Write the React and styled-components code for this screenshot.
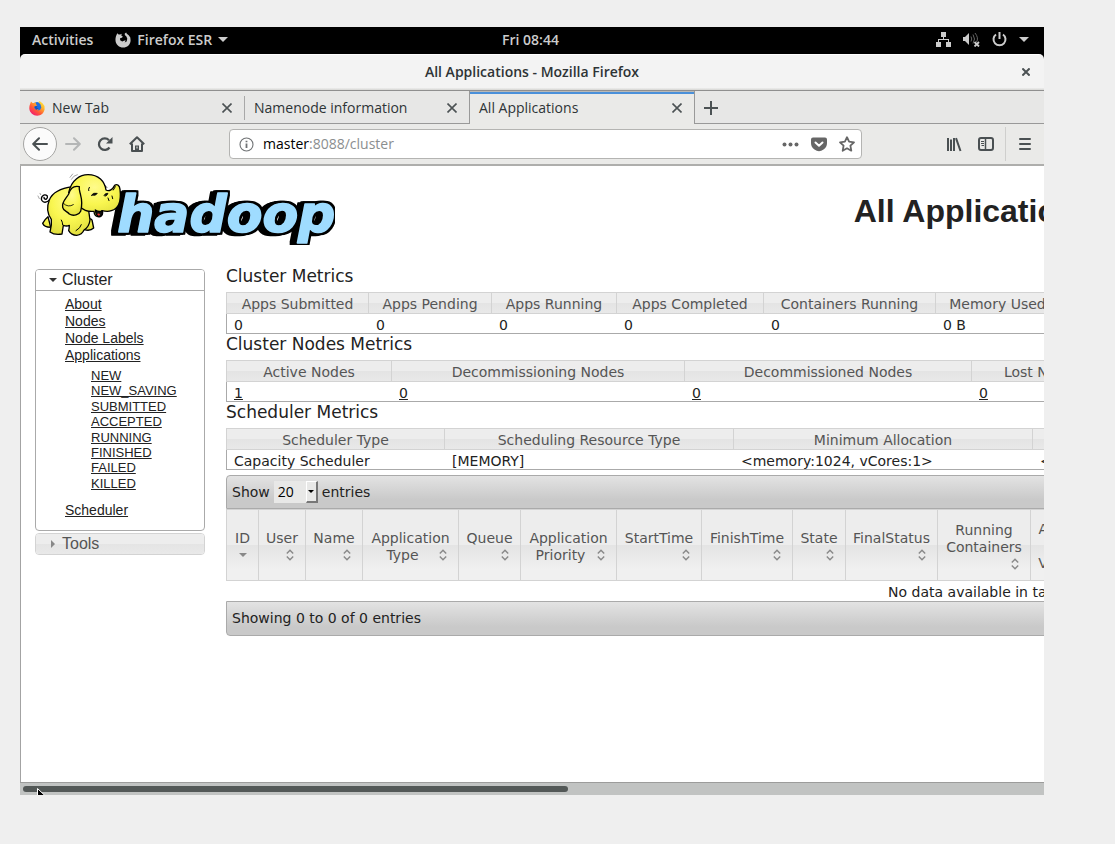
import React from "react";
import styled, { createGlobalStyle, css } from "styled-components";

const uiFont = `"Open Sans", "Noto Sans", sans-serif`;
const tableFont = `"DejaVu Sans", sans-serif`;
const arialFont = `"Liberation Sans", Arial, sans-serif`;

const GlobalStyle = createGlobalStyle`
  *, *::before, *::after { box-sizing: border-box; }
  body { margin: 0; background: #efefef; color: #222; font: 14px/17px ${tableFont}; }
  button, select, input { font: inherit; color: inherit; }
  h1, h2, p, ul { margin: 0; padding: 0; }
`;

const Desktop = styled.div`
  display: flex;
  flex-direction: column;
  min-height: 100vh;
  padding: 27px 71px 49px 20px;
`;

const Screen = styled.div`
  display: flex;
  flex-direction: column;
  flex: 1;
  min-width: 0;
  background: #000;
`;

/* ---------- GNOME top bar ---------- */

const TopBar = styled.header`
  display: grid;
  grid-template-columns: 1fr auto 1fr;
  align-items: center;
  height: 27px;
  padding: 0 15px 2px 12px;
  color: #ccc;
  font: 600 14px/20px ${uiFont};
`;

const TopGroup = styled.div`
  display: flex;
  align-items: center;
  gap: ${(p) => p.$gap}px;
  justify-content: ${(p) => (p.$end ? "flex-end" : "flex-start")};
`;

const PlainButton = styled.button`
  display: inline-flex;
  align-items: center;
  justify-content: center;
  gap: 6px;
  padding: 0;
  border: 0;
  background: none;
`;

/* ---------- Firefox window ---------- */

const TitleBar = styled.div`
  display: grid;
  grid-template-columns: 36px 1fr 36px;
  align-items: center;
  height: 37px;
  border-bottom: 1px solid #8f8f8f;
  border-radius: 5px 5px 0 0;
  background: linear-gradient(#fff 0 1px, #f3f3f3 1px 34px, #dcdcda 35px);
  color: #2e3436;
  font: 600 14px/20px ${uiFont};
  text-align: center;
`;

const TabBar = styled.div`
  display: flex;
  height: 33px;
  background: linear-gradient(#e7e7e6 0 32px, #999 32px);
  color: #2e3436;
  font: 14px/20px ${uiFont};
`;

const Tab = styled.div`
  display: flex;
  align-items: center;
  gap: 7px;
  width: 225px;
  padding: 1px 13px 0 9px;
  ${(p) =>
    p.$active
      ? css`
          width: 226px;
          margin-left: -1px;
          padding-right: 12px;
          border: solid #999;
          border-width: 0 1px;
          background: linear-gradient(#b9b9b7 0 1px, #4a90d9 1px 3px, #eaeae8 3px);
        `
      : css`
          background: linear-gradient(#a8a8a8, #a8a8a8) right 5px / 1px 24px no-repeat;
          &:has(+ [data-active="true"]) { background: none; }
        `}
`;

const TabLabel = styled.span`
  flex: 1;
  white-space: nowrap;
`;

const NavBar = styled.nav`
  display: flex;
  align-items: center;
  height: 42px;
  padding: 0 3px;
  border-bottom: 2px solid #aeaeac;
  background: #eaeae8;
  color: #4a5052;
`;

const NavButton = styled.button`
  display: inline-flex;
  align-items: center;
  justify-content: center;
  flex: none;
  width: 32px;
  height: 34px;
  padding: 0;
  border: 0;
  background: none;
  color: ${(p) => (p.$dim ? "#b4b6b6" : "inherit")};
  ${(p) =>
    p.$round &&
    css`
      width: 34px;
      border: 1px solid #a5a5a3;
      border-radius: 17px;
      background: #fbfbfb;
    `}
`;

const UrlBox = styled.div`
  display: flex;
  align-items: center;
  flex: 1;
  height: 30px;
  margin: 0 76px;
  padding: 0 6px 0 9px;
  border: 1px solid #b4b4b2;
  border-radius: 4px;
  background: #fff;
  color: #5d6061;
  font: 14px/20px ${uiFont};
`;

const Address = styled.div`
  flex: 1;
  padding-left: 9px;
  color: #8b8e8f;
  b { color: #000; font-weight: 400; }
`;

const UrlIcons = styled.div`
  display: flex;
  align-items: center;
  gap: 12px;
`;

const NavDivider = styled.span`
  width: 1px;
  height: 34px;
  margin: 0 3px;
  background: #cfcfcd;
`;

/* ---------- Web page ---------- */

const Viewport = styled.main`
  flex: 1;
  overflow: hidden;
  border-left: 1px solid #a3a3a3;
  background: #fff;
`;

const PageGrid = styled.div`
  display: grid;
  grid-template-columns: 170px 1504px;
  grid-template-rows: 100px auto;
  column-gap: 21px;
  padding-left: 14px;
`;

const LogoLink = styled.a`
  grid-area: 1 / 1 / 2 / 3;
  width: 300px;
  height: 72px;
  margin-top: 7px;
  svg { display: block; }
`;

const PageTitle = styled.h1`
  grid-area: 1 / 2;
  padding: 9px 8px 0 0;
  font: 700 32px/72px ${arialFont};
  text-align: center;
  justify-self: center;
`;

const Sidebar = styled.aside`
  display: flex;
  flex-direction: column;
  gap: 2px;
  padding-top: 3px;
  font-family: ${arialFont};
`;

const glass = css`
  background: linear-gradient(#ededed 0 50%, #e4e4e4 50%, #f0f0f0 calc(50% + 25px));
`;

const Panel = styled.section`
  overflow: hidden;
  border: 1px solid ${(p) => (p.$open ? "#aaa" : "#d3d3d3")};
  border-radius: 4px;
`;

const PanelToggle = styled.button`
  display: flex;
  align-items: center;
  gap: 5px;
  width: 100%;
  height: 20px;
  padding: 0 0 0 13px;
  border: 0;
  color: #555;
  font: 16px/20px ${arialFont};
  ${glass}
  ${(p) =>
    p.$open &&
    css`
      height: 21px;
      border-bottom: 1px solid #aaa;
      background: #fff;
      color: #222;
    `}
`;

const LinkList = styled.ul`
  padding: 5px 0 11px 29px;
  list-style: none;
  font: 14px/17px ${arialFont};
  a { color: #222; }
`;

const StateList = styled.ul`
  display: grid;
  grid-auto-rows: 1fr;
  height: 123px;
  margin: 4px 0 11px 26px;
  list-style: none;
  font: 13px/15px ${arialFont};
`;

const Content = styled.div`
  display: flex;
  flex-direction: column;
`;

const SectionTitle = styled.h2`
  height: 26px;
  padding-bottom: 6px;
  font: 17px/20px ${tableFont};
`;

const Table = styled.table`
  width: 100%;
  table-layout: fixed;
  border-spacing: 0;
  color: #222;
`;

const HeadCell = styled.th`
  height: 22px;
  padding: 3px 7px 0;
  overflow: hidden;
  border: 1px solid #d3d3d3;
  border-left-width: 0;
  color: #555;
  font-weight: 400;
  white-space: nowrap;
  ${glass}
  &:first-child { border-left-width: 1px; }
`;

const Cell = styled.td`
  height: 20px;
  padding: 3px 7px 0;
  border-bottom: 1px solid #aaa;
  line-height: 16px;
  white-space: nowrap;
  &:first-child { border-left: 1px solid #aaa; }
  a { color: #222; }
`;

const SortHeadCell = styled(HeadCell)`
  height: 72px;
  padding: 3px 7px 0;
  white-space: normal;
`;

const SortLabel = styled.div`
  display: flow-root;
  cursor: pointer;
`;

const SortIcon = styled.svg`
  float: right;
  width: 16px;
  height: 16px;
`;

const EmptyCell = styled.td`
  height: 20px;
  padding: 3px 0 0;
  text-align: center;
`;

const GridBar = styled.div`
  display: flex;
  align-items: center;
  gap: 4px;
  height: ${(p) => (p.$foot ? 35 : 34)}px;
  margin-top: ${(p) => (p.$foot ? 0 : 5)}px;
  padding: 0 5px;
  border: 1px solid #aaa;
  border-radius: ${(p) => (p.$foot ? "0 0 4px 4px" : "4px 4px 0 0")};
  background: linear-gradient(#e3e3e3, #c9c9c9 75%);
`;

const ShowLabel = styled.label`
  display: flex;
  align-items: center;
  gap: 4px;
`;

const SelectBox = styled.span`
  display: inline-grid;
  width: 44px;
  height: 22px;
`;

const CountSelect = styled.select`
  grid-area: 1 / 1;
  appearance: none;
  padding: 0 4px;
  border: 0;
  border-radius: 0;
  background: #e8e8e7;
  color: #000;
  font: 14px/20px ${uiFont};
`;

const SelectArrow = styled.span`
  display: flex;
  align-items: center;
  justify-content: center;
  grid-area: 1 / 1;
  justify-self: end;
  width: 12px;
  border: 1px solid #fff;
  border-right: 2px solid #777;
  border-bottom: 2px solid #777;
  background: #e8e8e7;
  pointer-events: none;
`;

const ScrollTrack = styled.div`
  position: relative;
  height: 13px;
  padding: 3px;
  border-top: 1px solid #9c9c9b;
  overflow: hidden;
  background: #c1c3c2;
`;

const ScrollThumb = styled.div`
  width: 545px;
  max-width: 100%;
  height: 6px;
  border-radius: 3px;
  background: #535857;
`;

const Cursor = styled.svg`
  position: absolute;
  top: 5px;
  left: 17px;
`;

/* ---------- Icons ---------- */

const Caret = ({ size = 10, fill = "currentColor" }) => (
  <svg width={size} height={size / 2} viewBox="0 0 10 5" aria-hidden="true">
    <path d="M0 0h10L5 5z" fill={fill} />
  </svg>
);

const Cross = ({ size = 10, weight = 1.6 }) => (
  <svg width={size} height={size} viewBox="0 0 10 10" fill="none" stroke="#4c5254" strokeWidth={weight} aria-hidden="true">
    <path d="M.5.5l9 9M9.5.5l-9 9" />
  </svg>
);

const FirefoxMono = () => (
  <svg width="16" height="16" viewBox="0 0 16 16" aria-hidden="true">
    <path
      d="M1.500 3L2.300 1.200 3.600 2.600 5.200 2.600 6.600 1.700 6.400 3.800 8 4.800 6.300 6 5 6.200 5.200 8.200 7.200 9.400 9.500 8.400 10.800 8.400 9.600 10.400 11.600 9.400 12.300 6.800 11.400 4.500 9.800 3 9.800 1.600 11.200.6 11.800 1.800 13.700 3.300 15.300 5.600 15.600 8.800C15.200 12.800 12.200 15.600 8.200 15.600S.700 12.500.5 8.500C.4 6.500.7 4.800 1.500 3z"
      fill="#ccc"
    />
  </svg>
);

const FirefoxColor = () => (
  <svg width="16" height="16" viewBox="0 0 16 16" aria-hidden="true">
    <defs>
      <linearGradient id="fx" x1="1" y1="0" x2="0.2" y2="1">
        <stop offset="0" stopColor="#fff44f" />
        <stop offset="0.35" stopColor="#ffb52a" />
        <stop offset="0.65" stopColor="#ff5a36" />
        <stop offset="1" stopColor="#f0147a" />
      </linearGradient>
    </defs>
    <circle cx="8" cy="7.500" r="5.500" fill="#1b6fe0" />
    <path d="M1.300 3.500L2 1.500 3.500 3 5.800 3 7 1.800 6.800 4 8.300 5.400 6 6.300 5 7.800 6.800 9.600 9.500 8.900 8.500 10.500 11 10 12.300 7.500 11.500 4.500 9.500 2.300 10.500 1 13.500 3.200 15.500 6 15.600 9.500C14.800 13.300 12 15.700 8.200 15.700S.500 12.700.3 8.500C.3 6.500.6 5 1.300 3.500z" fill="url(#fx)" />
    <path d="M5.500 6.500L8.500 6 7.500 7.500 9.800 8.600 7 9.700z" fill="#1450b8" />
  </svg>
);

const NetworkIcon = () => (
  <svg width="15" height="15" viewBox="0 0 15 15" fill="#ccc" aria-hidden="true">
    <path d="M5 0h5v5H8v2h5v3h2v5h-5v-5h2V8H3v2h2v5H0v-5h2V7h5V5H5z" />
  </svg>
);

const VolumeIcon = () => (
  <svg width="17" height="15" viewBox="0 0 17 15" fill="none" stroke="#666" aria-hidden="true">
    <path d="M0 5h2l4-4v12L2 9H0z" fill="#ccc" stroke="none" />
    <path d="M8 4.500q1.500 2.500 0 5M10 2.500q3 4.500 0 9M12 1q4 5 1.500 9" />
    <path d="M11.500 10l4.500 4.500M16 10l-4.500 4.500" stroke="#ccc" strokeWidth="1.800" />
  </svg>
);

const PowerIcon = () => (
  <svg width="15" height="15" viewBox="0 0 15 15" fill="none" stroke="#ccc" strokeWidth="2" aria-hidden="true">
    <path d="M4 2.500a6 6 0 1 0 7 0M7.500 0v7" />
  </svg>
);

const BackIcon = () => (
  <svg width="16" height="14" viewBox="0 0 16 14" fill="none" stroke="currentColor" strokeWidth="2" strokeLinejoin="round" strokeLinecap="round" aria-hidden="true">
    <path d="M15 7H1.500M7 1.200L1.200 7 7 12.800" />
  </svg>
);

const ForwardIcon = () => (
  <svg width="16" height="14" viewBox="0 0 16 14" fill="none" stroke="currentColor" strokeWidth="2" strokeLinejoin="round" strokeLinecap="round" aria-hidden="true">
    <path d="M1 7h13.500M9 1.200L14.800 7 9 12.800" />
  </svg>
);

const ReloadIcon = () => (
  <svg width="16" height="16" viewBox="0 0 16 16" fill="none" stroke="currentColor" strokeWidth="2.200" aria-hidden="true">
    <path d="M12.500 11.500A5.800 5.800 0 1 1 12 4.200" />
    <path d="M15.500 1v6.500H9z" fill="currentColor" stroke="none" />
  </svg>
);

const HomeIcon = () => (
  <svg width="16" height="16" viewBox="0 0 16 16" fill="none" stroke="currentColor" strokeWidth="2" strokeLinejoin="round" aria-hidden="true">
    <path d="M.8 8.300L8 1.200l7.200 7.100M3 7.500V15h10V7.500" />
    <path d="M6 15v-5.500h4V15z" fill="currentColor" stroke="none" />
    <path d="M8 10.500v2" stroke="#eaeae8" strokeWidth="1" />
  </svg>
);

const InfoIcon = () => (
  <svg width="15" height="15" viewBox="0 0 15 15" fill="none" stroke="#6f7274" aria-hidden="true">
    <circle cx="7.500" cy="7.500" r="6.500" strokeWidth="1.100" />
    <path d="M7.500 6.500V11M7.500 3.700v1.600" strokeWidth="1.800" />
  </svg>
);

const DotsIcon = () => (
  <svg width="17" height="5" viewBox="0 0 17 5" fill="#666" aria-hidden="true">
    <circle cx="2.500" cy="2.500" r="2" />
    <circle cx="8.500" cy="2.500" r="2" />
    <circle cx="14.500" cy="2.500" r="2" />
  </svg>
);

const PocketIcon = () => (
  <svg width="16" height="15" viewBox="0 0 16 15" aria-hidden="true">
    <path d="M2 .5h12q2 0 2 2V6q0 4-3.500 6.500Q8 16 3.500 12.500 0 10 0 6V2.500q0-2 2-2z" fill="#666" />
    <path d="M4.500 5.500L8 8.800l3.500-3.300" fill="none" stroke="#fff" strokeWidth="2" strokeLinecap="round" strokeLinejoin="round" />
  </svg>
);

const StarIcon = () => (
  <svg width="16" height="16" viewBox="0 0 16 16" fill="none" stroke="#666" strokeWidth="1.800" strokeLinejoin="round" aria-hidden="true">
    <path d="M8 1.200l2.100 4.500 4.900.6-3.600 3.400.9 5L8 12.300l-4.300 2.400.9-5L1 6.300l4.900-.6z" />
  </svg>
);

const LibraryIcon = () => (
  <svg width="16" height="15" viewBox="0 0 16 15" fill="none" stroke="currentColor" strokeWidth="2" aria-hidden="true">
    <path d="M2 1v13M5 2.500V14M8 1v13M10 1.200L14.500 14" />
  </svg>
);

const SidebarIcon = () => (
  <svg width="16" height="14" viewBox="0 0 16 14" fill="none" stroke="currentColor" aria-hidden="true">
    <rect x="1" y="1" width="14" height="12" rx="2" strokeWidth="2" />
    <path d="M7.500 1v12" strokeWidth="1.500" />
    <path d="M3 4.500h3M3 6.500h3M3.500 8.500H6" />
  </svg>
);

const MenuIcon = () => (
  <svg width="12" height="12" viewBox="0 0 12 12" fill="none" stroke="currentColor" strokeWidth="2" strokeLinecap="round" aria-hidden="true">
    <path d="M1 1h10M1 6h10M1 11h10" />
  </svg>
);

const SortGlyph = ({ sorted }) => (
  <SortIcon viewBox="0 0 16 16" aria-hidden="true">
    {sorted ? (
      <path d="M4 6h8l-4 4z" fill="#888" />
    ) : (
      <path d="M4.800 6.500L8 3.300l3.200 3.200M4.800 9.500L8 12.700l3.200-3.200" fill="none" stroke="#888" strokeWidth="1.400" />
    )}
  </SortIcon>
);

const HadoopLogo = () => (
  <svg width="300" height="72" viewBox="45 24 900 216" role="img" aria-label="hadoop">
    <defs>
      <radialGradient id="hide" cx="0.5" cy="0.3" r="0.8">
        <stop offset="0" stopColor="#fffb8c" />
        <stop offset="0.5" stopColor="#f9f650" />
        <stop offset="1" stopColor="#dcd93a" />
      </radialGradient>
      <filter id="slab" x="-10%" y="-10%" width="120%" height="120%" colorInterpolationFilters="sRGB">
        <feMorphology in="SourceAlpha" operator="dilate" radius="6" result="fat" />
        <feOffset in="fat" dx="-7" dy="1" result="near" />
        <feOffset in="fat" dx="-14" dy="2" result="far" />
        <feMerge>
          <feMergeNode in="far" />
          <feMergeNode in="near" />
          <feMergeNode in="fat" />
          <feMergeNode in="SourceGraphic" />
        </feMerge>
      </filter>
    </defs>
    <text
      x="292"
      y="200"
      fill="#9fdcff"
      stroke="#9fdcff"
      strokeWidth="5"
      strokeLinejoin="round"
      fontFamily="DejaVu Sans"
      fontWeight="700"
      fontStyle="italic"
      fontSize="156"
      filter="url(#slab)"
    >
      hadoop
    </text>
    <g transform="translate(42 15)" stroke="#000" strokeWidth="4" strokeLinejoin="round" strokeLinecap="round" fill="url(#hide)">
      <path d="M48 88C32 106 18 92 24 80q8-10 16-2 2 6-4 10-6 0-6-6" fill="none" />
      <path d="M42 140q-10 8-16 20 4 12 24 12zM150 150q20-8 24 0l5 24q-10 10-28 5z" />
      <path d="M116 50C84 54 56 66 46 90c-8 20-6 42 6 58q2 16-4 38 14 10 36 6l4-26q10 4 18 0 0 8-2 16 8 14 24 14 16-2 22-16 16-10 18-30l-10-70z" />
      <path d="M86 164q0-8-4-14M126 182q14-8 16-18" fill="none" strokeWidth="3" />
      <path d="M104 68C112 28 140 14 162 14c32 0 50 20 54 46 10 6 20-2 26-14 8-6 15 2 16 12 4 34-4 58-26 64-10 4-20 2-28 0 4 6 2 14-6 18-12 2-18-6-18-16-20 2-34-6-42-14z" />
      <path d="M184 120q12 8 20 2 4 14-6 18-12 0-14-20z" fill="#111" />
      <path d="M189 132q5-4 9 1-1 5-4 4z" fill="#e33" stroke="none" />
      <path d="M136 50C118 46 108 58 104 72c-6 12-22 24-18 40 2 12 14 12 20 20 12 8 30 2 34-8 4-16 4-34 0-48-2-10-6-16-4-26z" />
      <path d="M88 100q14 14 30 4" fill="none" strokeWidth="2.500" />
      <path d="M172 76q6-10 18-6-4 8-12 6zM210 76q4-8 12-6-2 6-6 8z" fill="#111" strokeWidth="2" />
      <path d="M164 62q-2-4 2-10M218 52l-6-6M222 84l3 8M234 78l2 8M238 60l6-10" fill="none" strokeWidth="3" />
      <path d="M112 28q6-12 18-14M108 22l8-10M12 78l4 8M18 70l2 4" fill="none" stroke="#777" strokeWidth="2" />
    </g>
  </svg>
);

/* ---------- Data ---------- */

const clusterMetrics = [
  { title: "Apps Submitted", value: "0", width: 143 },
  { title: "Apps Pending", value: "0", width: 123 },
  { title: "Apps Running", value: "0", width: 125 },
  { title: "Apps Completed", value: "0", width: 147 },
  { title: "Containers Running", value: "0", width: 172 },
  { title: "Memory Used", value: "0 B", width: 124 },
  { title: "", value: "" },
];

const nodeMetrics = [
  { title: "Active Nodes", value: "1", width: 166, link: true },
  { title: "Decommissioning Nodes", value: "0", width: 293, link: true },
  { title: "Decommissioned Nodes", value: "0", width: 287, link: true },
  { title: "Lost Nodes", value: "0", width: 142, link: true },
  { title: "", value: "" },
];

const schedulerMetrics = [
  { title: "Scheduler Type", value: "Capacity Scheduler", width: 219 },
  { title: "Scheduling Resource Type", value: "[MEMORY]", width: 289 },
  { title: "Minimum Allocation", value: "<memory:1024, vCores:1>", width: 299 },
  { title: "", value: "<" },
];

const appColumns = [
  { title: "ID", width: 33, sorted: true },
  { title: "User", width: 47 },
  { title: "Name", width: 57 },
  { title: "Application Type", width: 96 },
  { title: "Queue", width: 62 },
  { title: "Application Priority", width: 96 },
  { title: "StartTime", width: 85 },
  { title: "FinishTime", width: 91 },
  { title: "State", width: 53 },
  { title: "FinalStatus", width: 92 },
  { title: "Running Containers", width: 93 },
  { title: "Allocated CPU VCores", width: 81 },
  { title: "" },
];

const appStates = ["NEW", "NEW_SAVING", "SUBMITTED", "ACCEPTED", "RUNNING", "FINISHED", "FAILED", "KILLED"];

const Columns = ({ items }) => (
  <colgroup>
    {items.map((c, i) => (
      <col key={i} width={c.width} />
    ))}
  </colgroup>
);

const MetricsTable = ({ title, items }) => (
  <section>
    <SectionTitle>{title}</SectionTitle>
    <Table aria-label={title}>
      <Columns items={items} />
      <thead>
        <tr>
          {items.map((c, i) => (
            <HeadCell key={i}>{c.title}</HeadCell>
          ))}
        </tr>
      </thead>
      <tbody>
        <tr>
          {items.map((c, i) => (
            <Cell key={i}>{c.link ? <a href="#nodes">{c.value}</a> : c.value}</Cell>
          ))}
        </tr>
      </tbody>
    </Table>
  </section>
);

export default function App() {
  return (
    <Desktop>
      <GlobalStyle />
      <Screen>
        <TopBar>
          <TopGroup $gap={22}>
            <PlainButton>Activities</PlainButton>
            <PlainButton>
              <FirefoxMono />
              Firefox ESR
              <Caret />
            </PlainButton>
          </TopGroup>
          <PlainButton>Fri 08:44</PlainButton>
          <TopGroup $gap={12} $end>
            <NetworkIcon />
            <VolumeIcon />
            <PowerIcon />
            <Caret fill="#ccc" />
          </TopGroup>
        </TopBar>

        <TitleBar>
          <span />
          <span>All Applications - Mozilla Firefox</span>
          <PlainButton aria-label="Close window">
            <Cross size={8} weight={2.5} />
          </PlainButton>
        </TitleBar>

        <TabBar>
          <Tab>
            <FirefoxColor />
            <TabLabel>New Tab</TabLabel>
            <PlainButton aria-label="Close tab"><Cross /></PlainButton>
          </Tab>
          <Tab>
            <TabLabel>Namenode information</TabLabel>
            <PlainButton aria-label="Close tab"><Cross /></PlainButton>
          </Tab>
          <Tab $active data-active="true">
            <TabLabel>All Applications</TabLabel>
            <PlainButton aria-label="Close tab"><Cross /></PlainButton>
          </Tab>
          <NavButton aria-label="New tab">
            <svg width="14" height="14" viewBox="0 0 14 14" stroke="#4c5254" strokeWidth="2" aria-hidden="true">
              <path d="M7 0v14M0 7h14" />
            </svg>
          </NavButton>
        </TabBar>

        <NavBar>
          <NavButton $round aria-label="Back"><BackIcon /></NavButton>
          <NavButton $dim aria-label="Forward"><ForwardIcon /></NavButton>
          <NavButton aria-label="Reload"><ReloadIcon /></NavButton>
          <NavButton aria-label="Home"><HomeIcon /></NavButton>
          <UrlBox>
            <InfoIcon />
            <Address><b>master</b>:8088/cluster</Address>
            <UrlIcons>
              <DotsIcon />
              <PocketIcon />
              <StarIcon />
            </UrlIcons>
          </UrlBox>
          <NavButton aria-label="Library"><LibraryIcon /></NavButton>
          <NavButton aria-label="Sidebars"><SidebarIcon /></NavButton>
          <NavDivider />
          <NavButton aria-label="Menu"><MenuIcon /></NavButton>
        </NavBar>

        <Viewport>
          <PageGrid>
            <LogoLink href="#home"><HadoopLogo /></LogoLink>
            <PageTitle>All Applications</PageTitle>

            <Sidebar>
              <Panel $open>
                <PanelToggle $open aria-expanded="true">
                  <Caret size={8} fill="#333" />
                  Cluster
                </PanelToggle>
                <LinkList>
                  <li><a href="#about">About</a></li>
                  <li><a href="#nodes">Nodes</a></li>
                  <li><a href="#labels">Node Labels</a></li>
                  <li>
                    <a href="#apps">Applications</a>
                    <StateList>
                      {appStates.map((s) => (
                        <li key={s}><a href={`#${s}`}>{s}</a></li>
                      ))}
                    </StateList>
                  </li>
                  <li><a href="#scheduler">Scheduler</a></li>
                </LinkList>
              </Panel>
              <Panel>
                <PanelToggle aria-expanded="false">
                  <svg width="8" height="8" viewBox="0 0 8 8" aria-hidden="true">
                    <path d="M2 0l4 4-4 4z" fill="#888" />
                  </svg>
                  Tools
                </PanelToggle>
              </Panel>
            </Sidebar>

            <Content>
              <MetricsTable title="Cluster Metrics" items={clusterMetrics} />
              <MetricsTable title="Cluster Nodes Metrics" items={nodeMetrics} />
              <MetricsTable title="Scheduler Metrics" items={schedulerMetrics} />

              <GridBar>
                <ShowLabel>
                  Show
                  <SelectBox>
                    <CountSelect defaultValue="20">
                      <option>20</option>
                      <option>40</option>
                    </CountSelect>
                    <SelectArrow><Caret size={6} fill="#000" /></SelectArrow>
                  </SelectBox>
                  entries
                </ShowLabel>
              </GridBar>
              <Table aria-label="Applications">
                <Columns items={appColumns} />
                <thead>
                  <tr>
                    {appColumns.map((c, i) => (
                      <SortHeadCell key={i}>
                        {c.title && (
                          <SortLabel>
                            {c.title}
                            <SortGlyph sorted={c.sorted} />
                          </SortLabel>
                        )}
                      </SortHeadCell>
                    ))}
                  </tr>
                </thead>
                <tbody>
                  <tr>
                    <EmptyCell colSpan={appColumns.length}>No data available in table</EmptyCell>
                  </tr>
                </tbody>
              </Table>
              <GridBar $foot>Showing 0 to 0 of 0 entries</GridBar>
            </Content>
          </PageGrid>
        </Viewport>

        <ScrollTrack>
          <ScrollThumb />
          <Cursor width="12" height="18" viewBox="0 0 12 18" aria-hidden="true">
            <path d="M.5.5v14l3.500-3 2 5 2.500-1-2-5H11z" fill="#000" stroke="#fff" />
          </Cursor>
        </ScrollTrack>
      </Screen>
    </Desktop>
  );
}
